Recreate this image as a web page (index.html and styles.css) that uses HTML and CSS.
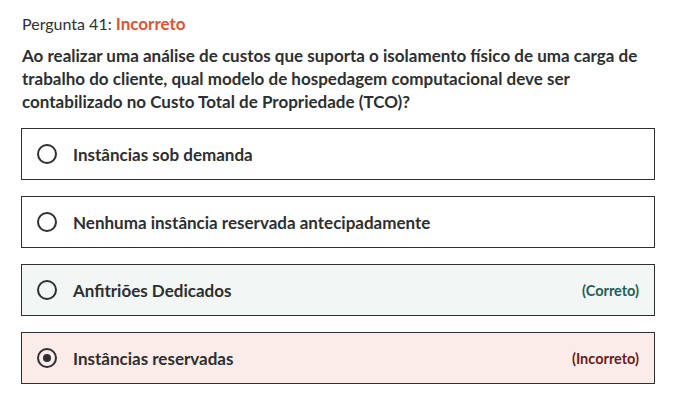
FILE: index.html
```html
<!DOCTYPE html>
<html lang="pt">
<head>
<meta charset="utf-8">
<link rel="stylesheet" href="styles.css">
</head>
<body>
<div class="quiz">
  <div class="q-title">Pergunta 41: <span class="status-wrong">Incorreto</span></div>
  <div class="q-text">Ao realizar uma análise de custos que suporta o isolamento físico de uma carga de trabalho do cliente, qual modelo de hospedagem computacional deve ser contabilizado no Custo Total de Propriedade (TCO)?</div>
  <ul class="options">
    <li class="option">
      <span class="radio"></span>
      <span class="label">Instâncias sob demanda</span>
    </li>
    <li class="option">
      <span class="radio"></span>
      <span class="label">Nenhuma instância reservada antecipadamente</span>
    </li>
    <li class="option option-correct">
      <span class="radio"></span>
      <span class="label">Anfitriões Dedicados</span>
      <span class="tag tag-correct">(Correto)</span>
    </li>
    <li class="option option-wrong">
      <span class="radio radio-checked"></span>
      <span class="label">Instâncias reservadas</span>
      <span class="tag tag-wrong">(Incorreto)</span>
    </li>
  </ul>
</div>
</body>
</html>
```
FILE: styles.css
```css
* { box-sizing: border-box; }
body {
  margin: 0;
  background: #ffffff;
  color: #2d2f31;
  font-family: "Lato", "Liberation Sans", sans-serif;
}
.quiz {
  width: 634px;
  margin-left: 21px;
  padding-top: 12px;
}
.q-title {
  font-size: 16px;
  line-height: 24px;
  padding-left: 1px;
}
.status-wrong {
  color: #e4532f;
  font-weight: 700;
  font-size: 17px;
}
.q-text {
  margin-top: 8px;
  font-size: 17px;
  line-height: 23px;
  font-weight: 700;
  padding-left: 1px;
  padding-right: 8px;
}
.options {
  list-style: none;
  margin: 15px 0 0 0;
  padding: 0;
  display: flex;
  flex-direction: column;
  gap: 16px;
}
.option {
  height: 52px;
  border: 1px solid #2d2f31;
  display: flex;
  align-items: center;
  padding: 0 15px 0 15px;
}
.option-correct { background: #f2f6f5; }
.option-wrong { background: #fbece9; }
.radio {
  width: 20px;
  height: 20px;
  border: 2px solid #2d2f31;
  border-radius: 50%;
  flex: none;
  display: flex;
  align-items: center;
  justify-content: center;
}
.radio-checked::after {
  content: "";
  width: 8px;
  height: 8px;
  border-radius: 50%;
  background: #2d2f31;
}
.label {
  margin-left: 16px;
  font-size: 17px;
  font-weight: 700;
  flex: 1;
}
.tag {
  font-size: 14.5px;
  font-weight: 700;
}
.tag-correct { color: #1e6055; }
.tag-wrong { color: #6b1c1c; }
```
